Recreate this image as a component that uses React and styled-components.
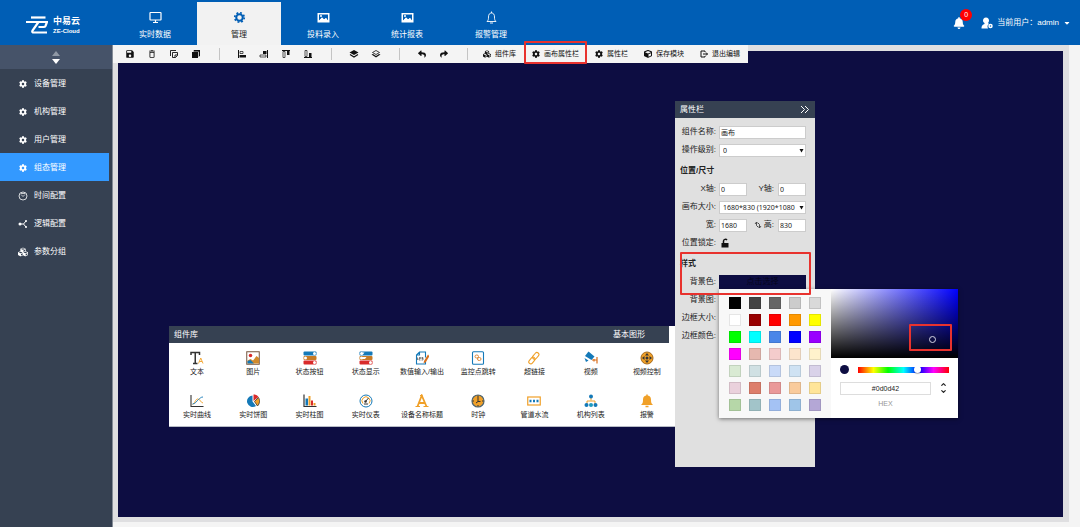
import React from "react";
import styled, { createGlobalStyle, css } from "styled-components";
import { FaBell, FaCaretDown, FaCog, FaCube, FaCubes, FaReply, FaShare } from "react-icons/fa";
import { MdSave, MdDeleteOutline } from "react-icons/md";
import { FiChevronDown, FiChevronUp } from "react-icons/fi";

const GlobalStyle = createGlobalStyle`
  * {
    box-sizing: border-box;
  }
  body {
    margin: 0;
    background: #f4f4f4;
    font-family: "Liberation Sans", "Noto Sans CJK SC", sans-serif;
    font-size: 8px;
    line-height: 12px;
    color: #222;
  }
  button, input, select {
    margin: 0;
    padding: 0;
    border: 0;
    background: none;
    font: inherit;
    color: inherit;
  }
  button {
    cursor: pointer;
  }
  svg {
    display: block;
    flex: none;
  }
`;

const Page = styled.div`
  display: flex;
  flex-direction: column;
  min-height: 100vh;
`;

const Header = styled.header`
  display: flex;
  height: 45px;
  background: #005eb5;
  color: #fff;
`;

const Logo = styled.a`
  display: flex;
  align-items: center;
  gap: 5px;
  width: 113px;
  padding: 4px 0 0 26px;
  color: #fff;
  text-decoration: none;
`;

const LogoText = styled.span`
  display: flex;
  flex-direction: column;
  padding-top: 2px;
  font-size: 9px;
  font-weight: bold;
  line-height: 10px;
  small {
    font-size: 6px;
  }
`;

const Nav = styled.nav`
  display: flex;
  flex: 1;
  padding-top: 2px;
`;

const NavItem = styled.a`
  display: flex;
  flex-direction: column;
  align-items: center;
  gap: 5px;
  width: 84px;
  padding-top: 9px;
  color: ${(p) => (p.$active ? "#222" : "#fff")};
  background: ${(p) => (p.$active ? "#f2f2f2" : "transparent")};
  text-decoration: none;
  svg {
    color: ${(p) => (p.$active ? "#005eb5" : "#fff")};
  }
`;

const UserArea = styled.div`
  display: flex;
  align-items: center;
  gap: 16px;
  padding-right: 9px;
`;

const Bell = styled.button`
  position: relative;
`;

const Badge = styled.span`
  position: absolute;
  top: -8px;
  right: -7px;
  width: 12px;
  height: 12px;
  border-radius: 50%;
  background: #f00;
  font-size: 7px;
  text-align: center;
`;

const UserButton = styled.button`
  display: flex;
  align-items: center;
  gap: 4px;
`;

const Main = styled.div`
  display: flex;
  flex: 1;
`;

const Sidebar = styled.aside`
  width: 113px;
  background: #364152;
  border-right: 1px solid #858c97;
`;

const Sorter = styled.button`
  display: flex;
  flex-direction: column;
  align-items: center;
  justify-content: center;
  gap: 3px;
  width: 100%;
  height: 24px;
  background: #465369;
`;

const SideItem = styled.a`
  display: flex;
  align-items: center;
  gap: 6px;
  height: 28px;
  margin-right: 3px;
  padding: 2px 0 0 18px;
  color: #fff;
  background: ${(p) => (p.$active ? "#3399ff" : "transparent")};
  text-decoration: none;
`;

const Workspace = styled.main`
  position: relative;
  display: flex;
  flex: 1;
  margin: 0 11px 5px 0;
  padding: 6px 6px 5px 5px;
  background: #dfdfe1;
`;

const Canvas = styled.section`
  position: relative;
  flex: 1;
  background: #0d0d42;
`;

const Toolbar = styled.div`
  position: absolute;
  z-index: 2;
  top: 0;
  left: 0;
  display: flex;
  align-items: stretch;
  height: 18px;
  padding-left: 6px;
  background: #f4f4f4;
  color: #111;
  font-size: 7px;
`;

const IconButton = styled.button`
  display: flex;
  align-items: center;
  justify-content: center;
  width: 22px;
`;

const Separator = styled.span`
  width: 1px;
  margin: 3px ${(p) => (p.$last ? "7px" : "11px")} 3px 12px;
  background: #c4c4c4;
`;

const redBox = css`
  content: "";
  position: absolute;
  border: 2px solid #e8322e;
  border-radius: 1px;
  pointer-events: none;
`;

const ToolButton = styled.button`
  position: relative;
  display: flex;
  align-items: center;
  gap: 4px;
  padding: 0 8px;
  white-space: nowrap;
  ${(p) =>
    p.$marked &&
    css`
      &::after {
        ${redBox}
        inset: -4px 0 -1px 0;
      }
    `}
`;

const Library = styled.section`
  position: absolute;
  top: 275px;
  left: 51px;
  width: 506px;
  background: #fff;
  border-bottom: 1px solid #b8bcc6;
`;

const PanelHeader = styled.header`
  display: flex;
  align-items: center;
  justify-content: space-between;
  height: 17px;
  padding: 1px 5px 0;
  background: #364152;
  color: #fff;
`;

const LibraryHeader = styled(PanelHeader)`
  margin-right: 6px;
  padding-right: 24px;
`;

const LibraryGrid = styled.div`
  display: grid;
  grid-template-columns: repeat(9, 1fr);
  grid-auto-rows: 43px;
  height: 83px;
  padding-top: 8px;
`;

const LibraryItem = styled.button`
  display: flex;
  flex-direction: column;
  align-items: center;
  gap: 2px;
  font-size: 7px;
  line-height: 10px;
  color: #222;
  white-space: nowrap;
`;

const Props = styled.section`
  position: absolute;
  top: 50px;
  left: 557px;
  width: 140px;
  height: 366px;
  background: #e0e0e0;
`;

const Form = styled.form`
  padding: 5px 9px 0 5px;
`;

const GroupTitle = styled.h3`
  height: 21px;
  margin: 0;
  padding-top: 6px;
  font-size: 8px;
`;

const Row = styled.div`
  display: flex;
  align-items: center;
  height: 18px;
`;

const Label = styled.label`
  display: flex;
  align-items: center;
  justify-content: flex-end;
  gap: 2px;
  width: ${(p) => (p.$short ? "27px" : "36px")};
  margin-right: ${(p) => (p.$short ? "4px" : "3px")};
  white-space: nowrap;
`;

const field = css`
  height: 13px;
  border: 1px solid #ccc;
  background: #fff;
  color: #222;
  font-family: "Noto Sans", "Noto Sans CJK SC", sans-serif;
  font-size: 7px;
`;

const Input = styled.input`
  ${field}
  width: 28px;
  flex: ${(p) => (p.$wide ? 1 : "none")};
  padding-left: 1px;
`;

const SelectBox = styled.span`
  position: relative;
  display: flex;
  flex: 1;
  min-width: 0;
  svg {
    position: absolute;
    top: 4px;
    right: 2px;
    pointer-events: none;
  }
`;

const Select = styled.select`
  ${field}
  width: 100%;
  padding: 0 8px 0 3px;
  appearance: none;
`;

const ColorButton = styled.button`
  flex: 1;
  height: 14px;
  background: #0d0d42;
  color: #04041c;
`;

const StyleMark = styled.div`
  ${redBox}
  z-index: 2;
  top: 151px;
  left: 5px;
  width: 131px;
  height: 43px;
`;

const Picker = styled.div`
  position: absolute;
  top: 188px;
  left: 44px;
  display: flex;
  width: 239px;
  background: #fff;
  box-shadow: 0 1px 4px rgba(0, 0, 0, 0.5);
`;

const Swatches = styled.div`
  display: grid;
  grid-template-columns: repeat(5, 12px);
  grid-auto-rows: 12px;
  gap: 5px 8px;
  padding: 8px 10px 7px;
  background: #f8f8f8;
`;

const Swatch = styled.button`
  background: ${(p) => p.$color};
  border: 1px solid rgba(0, 0, 0, 0.1);
`;

const Chooser = styled.div`
  flex: 1;
  min-width: 0;
`;

const Shade = styled.div`
  position: relative;
  height: 69px;
  background: linear-gradient(to top, #000, transparent), linear-gradient(to right, #fff, #00f);
`;

const ShadeHandle = styled.span`
  position: absolute;
  top: 47px;
  left: 98px;
  width: 7px;
  height: 7px;
  border: 1px solid #d5d5e5;
  border-radius: 50%;
`;

const ShadeMark = styled.span`
  ${redBox}
  top: 35px;
  left: 78px;
  width: 43px;
  height: 27px;
`;

const HueRow = styled.div`
  display: flex;
  align-items: center;
  gap: 9px;
  height: 23px;
  padding: 0 9px;
`;

const CurrentColor = styled.span`
  width: 9px;
  height: 9px;
  border-radius: 50%;
  background: #0d0d42;
`;

const Hue = styled.input`
  flex: 1;
  min-width: 0;
  height: 6px;
  appearance: none;
  background: linear-gradient(to right, #f00, #ff0 17%, #0f0 33%, #0ff 50%, #00f 67%, #f0f 83%, #f00);
  &::-webkit-slider-thumb {
    appearance: none;
    width: 7px;
    height: 7px;
    border-radius: 50%;
    background: #fff;
    box-shadow: 0 1px 1px rgba(0, 0, 0, 0.3);
  }
`;

const HexRow = styled.div`
  display: flex;
  align-items: center;
  gap: 9px;
  padding: 0 9px;
`;

const HexInput = styled.input`
  width: 91px;
  height: 13px;
  border: 1px solid #ddd;
  text-align: center;
  font-size: 7px;
`;

const HexLabel = styled.label`
  display: block;
  width: 91px;
  margin: 3px 0 0 9px;
  color: #969696;
  font-size: 7px;
  text-align: center;
`;

const ModeButton = styled.button`
  display: flex;
  flex-direction: column;
`;

const Glyph = ({ size = 14, box = 28, children }) => (
  <svg width={size} height={size} viewBox={`0 0 ${box} ${box}`} fill="none" aria-hidden="true">
    {children}
  </svg>
);

const BLUE = "#1479b8";
const ORANGE = "#f0a028";
const RED = "#d92b2b";
const DARK = "#333";

const LogoMark = () => (
  <svg width="22" height="18" viewBox="0 0 44 36" fill="none" stroke="#fff" strokeWidth="4.4">
    <path d="M10 3H39" />
    <path d="M0 12H42L39 20Q38 22 35 22H25" />
    <path d="M25 12L13 29Q11 33 16 33H42" />
  </svg>
);

const NavIcons = {
  monitor: (
    <Glyph size={13} box={26}>
      <rect x="2" y="3" width="22" height="15" rx="1" stroke="currentColor" strokeWidth="2.4" />
      <path d="M13 18v5M8 23h10" stroke="currentColor" strokeWidth="2.4" />
    </Glyph>
  ),
  gear: (
    <Glyph size={13} box={26}>
      <circle cx="13" cy="13" r="6.500" stroke="currentColor" strokeWidth="4" />
      <circle cx="13" cy="13" r="9.500" stroke="currentColor" strokeWidth="3.400" strokeDasharray="3.730 3.730" />
    </Glyph>
  ),
  picture: (
    <Glyph size={13} box={26}>
      <path
        fill="currentColor"
        fillRule="evenodd"
        d="M1 4h24v19H1zM4 19l6-6 4 4 4-3 4 5V7H4zM8 8a2 2 0 1 1 0 4 2 2 0 0 1 0-4z"
      />
      <path d="M4 20l6-7 4 4 4-3 4 6z" fill="currentColor" />
    </Glyph>
  ),
  bell: (
    <Glyph size={13} box={26}>
      <path
        d="M4 21c3-3 3-5 3-9 0-5 2-8 6-8s6 3 6 8c0 4 0 6 3 9zM13 4V1M10 24h6"
        stroke="currentColor"
        strokeWidth="1.8"
      />
    </Glyph>
  ),
};

const Gauge = () => (
  <Glyph size={10} box={20}>
    <circle cx="10" cy="10" r="8" stroke="currentColor" strokeWidth="1.6" />
    <path d="M6 7l4 4 4-4M6 5h8" stroke="currentColor" strokeWidth="1.4" />
  </Glyph>
);

const Branch = () => (
  <Glyph size={10} box={20}>
    <path d="M4 10h7l5-6M11 10l5 6" stroke="currentColor" strokeWidth="2" />
    <circle cx="4" cy="10" r="3" fill="currentColor" />
    <circle cx="16" cy="4" r="2" fill="currentColor" />
    <circle cx="16" cy="16" r="2" fill="currentColor" />
  </Glyph>
);

const UserIcon = () => (
  <Glyph size={12} box={24}>
    <path fill="currentColor" d="M10 1c4 0 6 3 6 6 0 2-1 4-2 5l2 2c-3 1-4 5-2 9H1c0-5 1-7 6-9v-2C5 11 4 9 4 7c0-3 2-6 6-6z" />
    <circle cx="19" cy="18" r="3" stroke="currentColor" strokeWidth="3" />
  </Glyph>
);

const toolIcons = {
  copy: (
    <Glyph size={10} box={20}>
      <path d="M3 14V3h11M7 7h10v6l-4 4H7zM17 12h-5v5" stroke="currentColor" strokeWidth="1.8" />
    </Glyph>
  ),
  paste: (
    <Glyph size={10} box={20}>
      <path d="M6 2h12v12h-2V5H6z" fill="currentColor" />
      <path d="M2 6h12v12H2z" fill="currentColor" />
      <path d="M4 4h12v12" stroke="currentColor" />
    </Glyph>
  ),
  left: (
    <Glyph size={10} box={20}>
      <path d="M3 2v16" stroke="currentColor" strokeWidth="2" />
      <path d="M6 5h6v4H6z" stroke="currentColor" strokeWidth="1.4" />
      <path d="M5 12h13v5H5z" fill="currentColor" />
    </Glyph>
  ),
  right: (
    <Glyph size={10} box={20}>
      <path d="M17 2v16" stroke="currentColor" strokeWidth="2" />
      <path d="M8 4h7v6H8z" fill="currentColor" />
      <path d="M2 12h12v4H2z" stroke="currentColor" strokeWidth="1.4" />
    </Glyph>
  ),
  top: (
    <Glyph size={10} box={20}>
      <path d="M2 3h16" stroke="currentColor" strokeWidth="2" />
      <path d="M4 5h4v12H4z" stroke="currentColor" strokeWidth="1.4" />
      <path d="M12 4h5v8h-5z" fill="currentColor" />
    </Glyph>
  ),
  bottom: (
    <Glyph size={10} box={20}>
      <path d="M2 17h16" stroke="currentColor" strokeWidth="2" />
      <path d="M4 3h4v12H4z" stroke="currentColor" strokeWidth="1.4" />
      <path d="M12 8h5v8h-5z" fill="currentColor" />
    </Glyph>
  ),
  front: (
    <Glyph size={10} box={20}>
      <path d="M10 2l9 5-9 5-9-5z" fill="currentColor" />
      <path d="M2 11l8 5 8-5" stroke="currentColor" strokeWidth="2.4" />
    </Glyph>
  ),
  back: (
    <Glyph size={10} box={20}>
      <path d="M10 3l7 4-7 4-7-4z" stroke="currentColor" strokeWidth="1.6" />
      <path d="M1 11l9 6 9-6-3-1-6 4-6-4z" fill="currentColor" />
    </Glyph>
  ),
  exit: (
    <Glyph size={8} box={16}>
      <path d="M10 4V2H2v12h8v-2M6 8h9M12 5l3 3-3 3" stroke="currentColor" strokeWidth="2" />
    </Glyph>
  ),
};

const SwitchArt = ({ second }) => (
  <Glyph>
    <rect x="1" y="1" width="26" height="8" rx="2" fill={BLUE} />
    <rect x="1" y="10" width="26" height="8" rx="2" fill="#c77a24" />
    <rect x="1" y="19" width="26" height="8" rx="2" fill={RED} />
    <circle cx={second ? 5 : 23} cy="5" r="3" fill="#fff" />
    <circle cx="5" cy="14" r="3" fill="#fff" />
    <circle cx="23" cy="23" r="3" fill="#fff" />
    {second && <path d="M4 3h7l-3 4H4zM5 12h10l-3 4H5z" fill="#fff" />}
  </Glyph>
);

const libraryItems = [
  {
    name: "文本",
    icon: (
      <Glyph>
        <path d="M2 8V3h17v5M10.500 3v22M6 25h9" stroke={DARK} strokeWidth="3" />
        <path d="M17 25l4.500-11L26 25M19 21h5" stroke={ORANGE} strokeWidth="1.800" />
      </Glyph>
    ),
  },
  {
    name: "图片",
    icon: (
      <Glyph>
        <rect x="1.500" y="1.500" width="25" height="25" fill="#fff" stroke="#75543c" strokeWidth="2" />
        <path d="M3 25v-6l6-3 5 3 7-9 5 4v11z" fill="#d08a2c" />
        <path d="M3 25v-5l6-2 7 7z" fill={BLUE} />
        <circle cx="9" cy="9" r="3.500" fill={RED} />
      </Glyph>
    ),
  },
  { name: "状态按钮", icon: <SwitchArt /> },
  { name: "状态显示", icon: <SwitchArt second /> },
  {
    name: "数值输入/输出",
    icon: (
      <Glyph>
        <path d="M21 13V2H9L3 8v18h18v-4M9 2v6H3" stroke={BLUE} strokeWidth="2.200" />
        <path d="M5 13v5M8 13h3v2H8v3h3M13 13h3v5h-3M13 15h3" stroke={DARK} strokeWidth="1.200" />
        <path d="M26 7l-8 13-1 5 5-3 7-12z" fill="#d9701e" />
      </Glyph>
    ),
  },
  {
    name: "监控点跳转",
    icon: (
      <Glyph>
        <rect x="3" y="1.500" width="22" height="25" rx="2" stroke={BLUE} strokeWidth="2.200" />
        <rect x="8" y="8" width="7" height="6" rx="3" stroke="#d9802a" strokeWidth="1.800" />
        <rect x="13" y="13" width="7" height="6" rx="3" stroke="#d9802a" strokeWidth="1.800" />
      </Glyph>
    ),
  },
  {
    name: "超链接",
    icon: (
      <Glyph>
        <g stroke={ORANGE} strokeWidth="2.200" transform="rotate(-50 14 14)">
          <rect x="0" y="10" width="15" height="8" rx="4" />
          <rect x="12" y="10" width="15" height="8" rx="4" />
        </g>
      </Glyph>
    ),
  },
  {
    name: "视频",
    icon: (
      <Glyph>
        <path d="M9 1l12 10-6 7L2 10z" fill={BLUE} />
        <path d="M1 14l8 5-5 3z" fill={BLUE} />
        <path d="M16 18h10M26 12v13M20 16v5" stroke="#d9701e" strokeWidth="2.400" />
      </Glyph>
    ),
  },
  {
    name: "视频控制",
    icon: (
      <Glyph>
        <circle cx="14" cy="14" r="12" fill={ORANGE} stroke="#a4681a" strokeWidth="2" />
        <path d="M14 4l4 5h-8zM14 24l4-5h-8zM4 14l5-4v8zM24 14l-5-4v8z" fill={DARK} />
        <circle cx="14" cy="14" r="3" fill={DARK} />
      </Glyph>
    ),
  },
  {
    name: "实时曲线",
    icon: (
      <Glyph>
        <path d="M2 2v23h25" stroke={DARK} strokeWidth="2.200" />
        <path d="M5 21c5-2 6-12 11-11s5 7 10 8" stroke={ORANGE} strokeWidth="1.800" />
        <path d="M5 20c6 0 8-6 12-9s5-5 9-5" stroke={BLUE} strokeWidth="1.800" />
      </Glyph>
    ),
  },
  {
    name: "实时饼图",
    icon: (
      <Glyph>
        <path d="M13 3a11.500 11.500 0 1 0 7 21l-7-9z" fill={BLUE} />
        <path d="M15 1c5 0 8 2 10 5l-10 8z" fill={RED} />
        <path d="M17 15l8-8c3 5 3 12-2 17z" fill={ORANGE} stroke={DARK} strokeWidth="1.600" />
      </Glyph>
    ),
  },
  {
    name: "实时柱图",
    icon: (
      <Glyph>
        <path d="M2 1v24h25" stroke={DARK} strokeWidth="2.400" />
        <path d="M5 9h5v14H5z" fill={BLUE} />
        <path d="M11 4h4v19h-4z" fill={ORANGE} />
        <path d="M16 13h4v10h-4z" fill={RED} />
        <path d="M21 18h4v5h-4z" fill={ORANGE} />
      </Glyph>
    ),
  },
  {
    name: "实时仪表",
    icon: (
      <Glyph>
        <circle cx="14" cy="14" r="12" stroke={BLUE} strokeWidth="2" />
        <path d="M8 19a8 8 0 1 1 12 0" stroke={ORANGE} strokeWidth="2" />
        <path d="M13 15l6-7M10 20h8" stroke={DARK} strokeWidth="2" />
        <circle cx="13" cy="15" r="2.500" fill={DARK} />
      </Glyph>
    ),
  },
  {
    name: "设备名称标题",
    icon: (
      <Glyph>
        <path d="M5 25L13.500 3 23 25M8 18h11" stroke={ORANGE} strokeWidth="3.600" />
        <path d="M1 25h9M17 25h10M10 3h5" stroke={ORANGE} strokeWidth="2.400" />
      </Glyph>
    ),
  },
  {
    name: "时钟",
    icon: (
      <Glyph>
        <circle cx="14" cy="14" r="12" fill={ORANGE} stroke="#4d6470" strokeWidth="2.400" />
        <path d="M14 6v9h5M14 3v3M14 22v3M3 14h3M22 14h3M14 15l-4 3" stroke={DARK} strokeWidth="2" />
      </Glyph>
    ),
  },
  {
    name: "管道水流",
    icon: (
      <Glyph>
        <rect x="1.500" y="6" width="25" height="16" stroke={ORANGE} strokeWidth="2.400" />
        <path d="M5 14h4M12 14h4M19 14h4" stroke={BLUE} strokeWidth="5" />
      </Glyph>
    ),
  },
  {
    name: "机构列表",
    icon: (
      <Glyph>
        <path d="M14 6v7M6 20v-6h16v6" stroke={ORANGE} strokeWidth="2" />
        <circle cx="14" cy="5" r="4" fill={BLUE} />
        <circle cx="5" cy="22" r="4" fill={BLUE} />
        <circle cx="14" cy="22" r="4" fill="#1e9bc0" />
        <circle cx="23" cy="22" r="4" fill={BLUE} />
      </Glyph>
    ),
  },
  {
    name: "报警",
    icon: (
      <Glyph>
        <path d="M2 22c4-3 4-7 4-11 0-5 3-8 8-8s8 3 8 8c0 4 0 8 4 11z" fill={ORANGE} />
        <path d="M14 1v3M11 25h6" stroke={ORANGE} strokeWidth="3" />
      </Glyph>
    ),
  },
];

const navItems = [
  { name: "实时数据", icon: NavIcons.monitor },
  { name: "管理", icon: NavIcons.gear, active: true },
  { name: "投料录入", icon: NavIcons.picture },
  { name: "统计报表", icon: NavIcons.picture },
  { name: "报警管理", icon: NavIcons.bell },
];

const sideItems = [
  { name: "设备管理", icon: <FaCog size={8} /> },
  { name: "机构管理", icon: <FaCog size={8} /> },
  { name: "用户管理", icon: <FaCog size={8} /> },
  { name: "组态管理", icon: <FaCog size={8} />, active: true },
  { name: "时间配置", icon: <Gauge /> },
  { name: "逻辑配置", icon: <Branch /> },
  { name: "参数分组", icon: <FaCubes size={10} /> },
];

const SideIcon = styled.span`
  display: flex;
  justify-content: center;
  width: 10px;
`;

const toolGroups = [
  [
    { name: "保存", icon: <MdSave size={10} /> },
    { name: "删除", icon: <MdDeleteOutline size={10} /> },
    { name: "复制", icon: toolIcons.copy },
    { name: "粘贴", icon: toolIcons.paste },
  ],
  [
    { name: "左对齐", icon: toolIcons.left },
    { name: "右对齐", icon: toolIcons.right },
    { name: "上对齐", icon: toolIcons.top },
    { name: "下对齐", icon: toolIcons.bottom },
  ],
  [
    { name: "置顶", icon: toolIcons.front },
    { name: "置底", icon: toolIcons.back },
  ],
  [
    { name: "撤销", icon: <FaReply size={8} /> },
    { name: "重做", icon: <FaShare size={8} /> },
  ],
];

const toolButtons = [
  { name: "组件库", icon: <FaCubes size={8} /> },
  { name: "画布属性栏", icon: <FaCog size={8} />, marked: true },
  { name: "属性栏", icon: <FaCog size={8} /> },
  { name: "保存模块", icon: <FaCube size={8} /> },
  { name: "退出编辑", icon: toolIcons.exit },
];

const swatches = [
  "#000000", "#434343", "#666666", "#cccccc", "#d9d9d9",
  "#ffffff", "#980000", "#ff0000", "#ff9900", "#ffff00",
  "#00ff00", "#00ffff", "#4a86e8", "#0000ff", "#9900ff",
  "#ff00ff", "#e6b8af", "#f4cccc", "#fce5cd", "#fff2cc",
  "#d9ead3", "#d0e0e3", "#c9daf8", "#cfe2f3", "#d9d2e9",
  "#ead1dc", "#dd7e6b", "#ea9999", "#f9cb9c", "#ffe599",
  "#b6d7a8", "#a2c4c9", "#a4c2f4", "#9fc5e8", "#b4a7d6",
];

const Arrow = () => (
  <svg width="5" height="5" viewBox="0 0 10 10">
    <path d="M1 2h8l-4 7z" fill="#111" />
  </svg>
);

const ColorPicker = () => (
  <Picker>
    <Swatches>
      {swatches.map((color) => (
        <Swatch key={color} type="button" $color={color} aria-label={color} />
      ))}
    </Swatches>
    <Chooser>
      <Shade>
        <ShadeHandle />
        <ShadeMark />
      </Shade>
      <HueRow>
        <CurrentColor />
        <Hue type="range" min="0" max="360" defaultValue="240" aria-label="色相" />
      </HueRow>
      <HexRow>
        <HexInput id="hex" defaultValue="#0d0d42" />
        <ModeButton type="button" aria-label="切换格式">
          <FiChevronUp size={7} strokeWidth={4} />
          <FiChevronDown size={7} strokeWidth={4} />
        </ModeButton>
      </HexRow>
      <HexLabel htmlFor="hex">HEX</HexLabel>
    </Chooser>
  </Picker>
);

const PropsPanel = () => (
  <Props>
    <PanelHeader>
      <span>属性栏</span>
      <button type="button" aria-label="收起">
        <Glyph size={10} box={20}>
          <path d="M2 2l7 7-7 7M10 2l7 7-7 7" stroke="currentColor" strokeWidth="2" />
        </Glyph>
      </button>
    </PanelHeader>
    <Form>
      <Row>
        <Label htmlFor="name">组件名称:</Label>
        <Input id="name" $wide defaultValue="画布" />
      </Row>
      <Row>
        <Label htmlFor="level">操作级别:</Label>
        <SelectBox>
          <Select id="level">
            <option>0</option>
          </Select>
          <Arrow />
        </SelectBox>
      </Row>
      <GroupTitle>位置/尺寸</GroupTitle>
      <Row>
        <Label htmlFor="x">X轴:</Label>
        <Input id="x" defaultValue="0" />
        <Label htmlFor="y" $short>
          Y轴:
        </Label>
        <Input id="y" defaultValue="0" />
      </Row>
      <Row>
        <Label htmlFor="size">画布大小:</Label>
        <SelectBox>
          <Select id="size">
            <option>1680*830 (1920*1080</option>
          </Select>
          <Arrow />
        </SelectBox>
      </Row>
      <Row>
        <Label htmlFor="w">宽:</Label>
        <Input id="w" defaultValue="1680" />
        <Label htmlFor="h" $short>
          <Glyph size={8} box={16}>
            <path
              d="M2 6l3-4 3 3M5 3v6l3 3M14 10l-3 4-3-3M11 13V7L8 4"
              stroke="currentColor"
              strokeWidth="1.500"
            />
          </Glyph>
          高:
        </Label>
        <Input id="h" defaultValue="830" />
      </Row>
      <Row>
        <Label as="span">位置锁定:</Label>
        <button type="button" aria-label="锁定位置">
          <Glyph size={12} box={24}>
            <path d="M5 12h14v9H5z" fill="#111" />
            <path d="M9 12V8a4 4 0 0 1 7-2" stroke="#111" strokeWidth="3" />
          </Glyph>
        </button>
      </Row>
      <GroupTitle>样式</GroupTitle>
      <Row>
        <Label as="span">背景色:</Label>
        <ColorButton type="button">点击选择</ColorButton>
      </Row>
      <Row>
        <Label as="span">背景图:</Label>
      </Row>
      <Row>
        <Label as="span">边框大小:</Label>
      </Row>
      <Row>
        <Label as="span">边框颜色:</Label>
      </Row>
    </Form>
    <StyleMark />
    <ColorPicker />
  </Props>
);

const App = () => {
  return (
    <Page>
      <GlobalStyle />
      <Header>
        <Logo href="#">
          <LogoMark />
          <LogoText>
            中易云
            <small>ZE-Cloud</small>
          </LogoText>
        </Logo>
        <Nav>
          {navItems.map((item) => (
            <NavItem key={item.name} href="#" $active={item.active}>
              {item.icon}
              {item.name}
            </NavItem>
          ))}
        </Nav>
        <UserArea>
          <Bell type="button" aria-label="报警消息">
            <FaBell size={12} />
            <Badge>0</Badge>
          </Bell>
          <UserButton type="button">
            <UserIcon />
            <span>当前用户：admin</span>
            <FaCaretDown size={8} />
          </UserButton>
        </UserArea>
      </Header>
      <Main>
        <Sidebar>
          <Sorter type="button" aria-label="滚动菜单">
            <svg width="8" height="5" viewBox="0 0 8 5">
              <path d="M4 0l4 5H0z" fill="#8f98a5" />
            </svg>
            <svg width="8" height="5" viewBox="0 0 8 5">
              <path d="M4 5l4-5H0z" fill="#fff" />
            </svg>
          </Sorter>
          {sideItems.map((item) => (
            <SideItem key={item.name} href="#" $active={item.active}>
              <SideIcon>{item.icon}</SideIcon>
              {item.name}
            </SideItem>
          ))}
        </Sidebar>
        <Workspace>
          <Toolbar>
            {toolGroups.map((group, i) => (
              <React.Fragment key={i}>
                {group.map((tool) => (
                  <IconButton key={tool.name} type="button" aria-label={tool.name}>
                    {tool.icon}
                  </IconButton>
                ))}
                <Separator $last={i === toolGroups.length - 1} />
              </React.Fragment>
            ))}
            {toolButtons.map((tool) => (
              <ToolButton key={tool.name} type="button" $marked={tool.marked}>
                {tool.icon}
                {tool.name}
              </ToolButton>
            ))}
          </Toolbar>
          <Canvas>
            <Library>
              <LibraryHeader>
                <span>组件库</span>
                <span>基本图形</span>
              </LibraryHeader>
              <LibraryGrid>
                {libraryItems.map((item) => (
                  <LibraryItem key={item.name} type="button">
                    {item.icon}
                    {item.name}
                  </LibraryItem>
                ))}
              </LibraryGrid>
            </Library>
            <PropsPanel />
          </Canvas>
        </Workspace>
      </Main>
    </Page>
  );
};

export default App;
